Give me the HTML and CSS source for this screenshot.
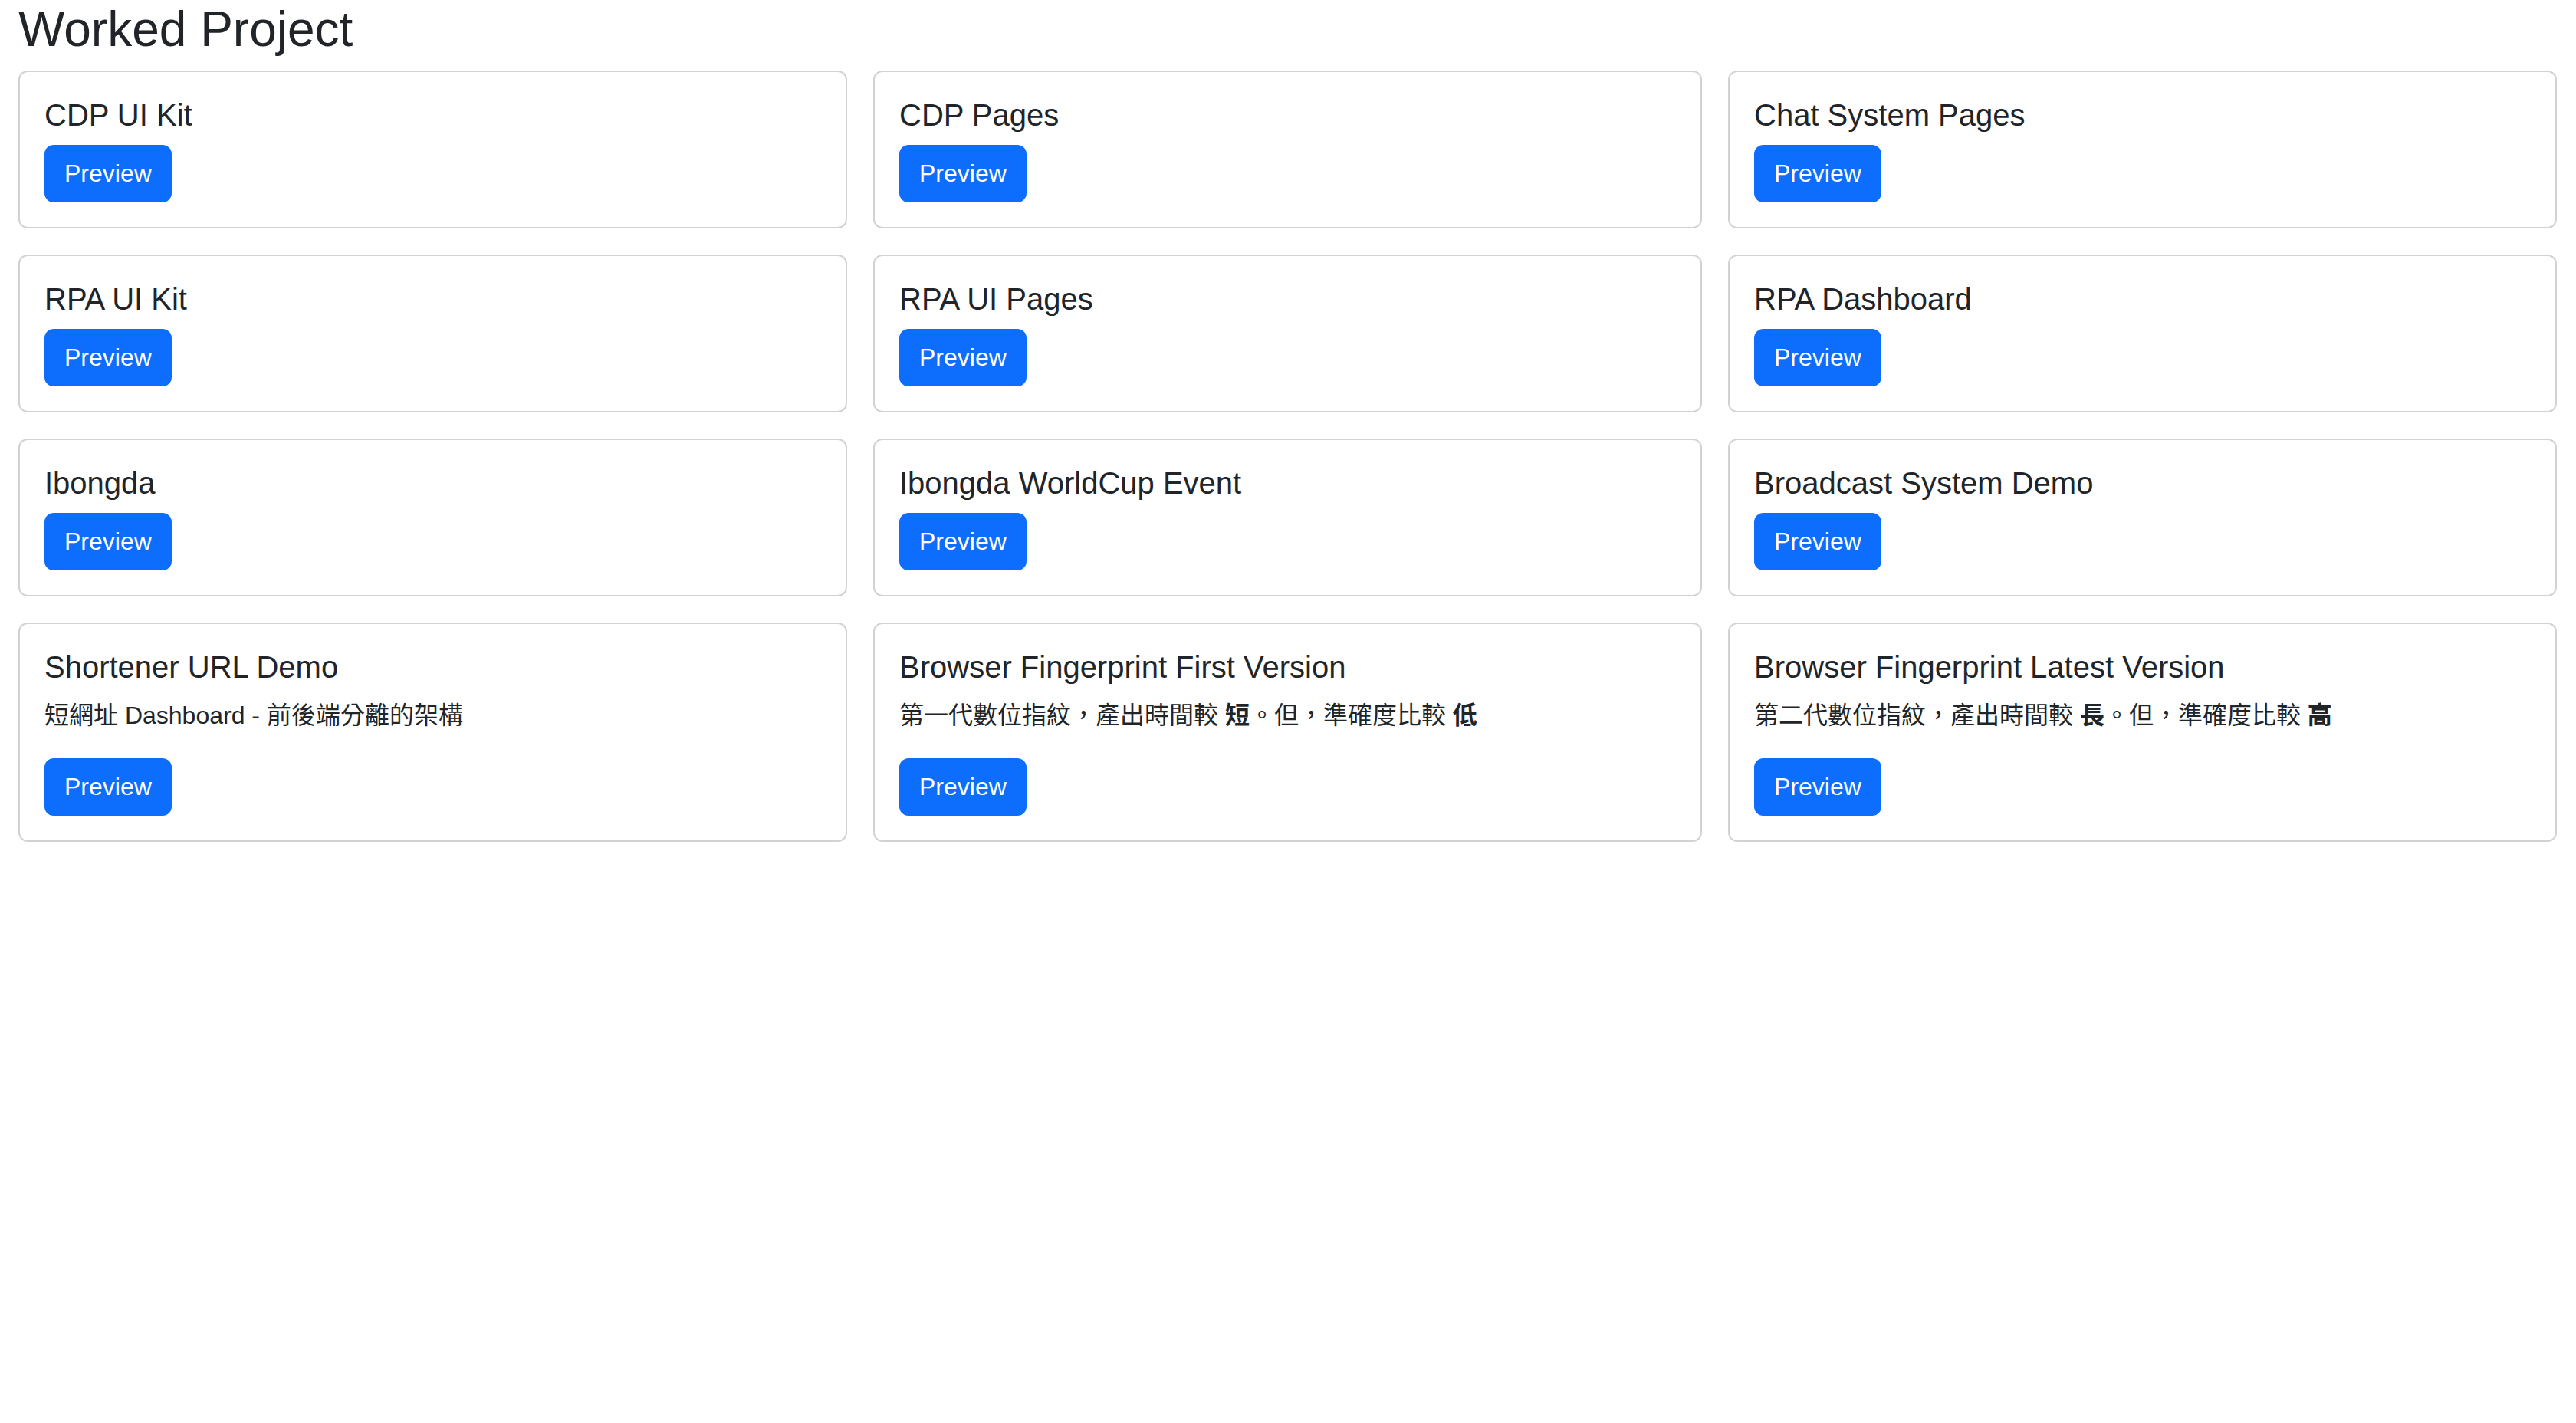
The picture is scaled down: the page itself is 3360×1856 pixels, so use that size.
FILE: index.html
```html
<!DOCTYPE html>
<html lang="zh-Hant">
<head>
    <meta charset="UTF-8">
    <meta name="viewport" content="width=device-width, initial-scale=1.0">
    <title>Worked Project</title>
    <link rel="stylesheet" href="styles.css">
</head>
<body>
    <div class="container">
        <h1>Worked Project</h1>
        <div class="project-grid">
            <div class="card">
                <div class="card-body">
                    <h5 class="card-title">CDP UI Kit</h5>
                    <a class="btn" href="#">Preview</a>
                </div>
            </div>
            <div class="card">
                <div class="card-body">
                    <h5 class="card-title">CDP Pages</h5>
                    <a class="btn" href="#">Preview</a>
                </div>
            </div>
            <div class="card">
                <div class="card-body">
                    <h5 class="card-title">Chat System Pages</h5>
                    <a class="btn" href="#">Preview</a>
                </div>
            </div>
            <div class="card">
                <div class="card-body">
                    <h5 class="card-title">RPA UI Kit</h5>
                    <a class="btn" href="#">Preview</a>
                </div>
            </div>
            <div class="card">
                <div class="card-body">
                    <h5 class="card-title">RPA UI Pages</h5>
                    <a class="btn" href="#">Preview</a>
                </div>
            </div>
            <div class="card">
                <div class="card-body">
                    <h5 class="card-title">RPA Dashboard</h5>
                    <a class="btn" href="#">Preview</a>
                </div>
            </div>
            <div class="card">
                <div class="card-body">
                    <h5 class="card-title">Ibongda</h5>
                    <a class="btn" href="#">Preview</a>
                </div>
            </div>
            <div class="card">
                <div class="card-body">
                    <h5 class="card-title">Ibongda WorldCup Event</h5>
                    <a class="btn" href="#">Preview</a>
                </div>
            </div>
            <div class="card">
                <div class="card-body">
                    <h5 class="card-title">Broadcast System Demo</h5>
                    <a class="btn" href="#">Preview</a>
                </div>
            </div>
            <div class="card">
                <div class="card-body">
                    <h5 class="card-title">Shortener URL Demo</h5>
                    <p class="card-text">短網址 Dashboard - 前後端分離的架構</p>
                    <a class="btn" href="#">Preview</a>
                </div>
            </div>
            <div class="card">
                <div class="card-body">
                    <h5 class="card-title">Browser Fingerprint First Version</h5>
                    <p class="card-text">第一代數位指紋，產出時間較 <b>短</b>。但，準確度比較 <b>低</b></p>
                    <a class="btn" href="#">Preview</a>
                </div>
            </div>
            <div class="card">
                <div class="card-body">
                    <h5 class="card-title">Browser Fingerprint Latest Version</h5>
                    <p class="card-text">第二代數位指紋，產出時間較 <b>長</b>。但，準確度比較 <b>高</b></p>
                    <a class="btn" href="#">Preview</a>
                </div>
            </div>
        </div>
    </div>
</body>
</html>
```

FILE: styles.css
```css
body {
    margin: 0;
    font-family: "Liberation Sans", "Noto Sans CJK TC", sans-serif;
    font-size: 32px;
    line-height: 1.5;
    color: #212529;
    background-color: #fff;
}

.container {
    padding: 0 25px 0 24px;
}

h1 {
    margin: 0 0 15px;
    font-size: 64px;
    font-weight: 500;
    line-height: 1.2;
}

.project-grid {
    display: grid;
    grid-template-columns: repeat(3, 1fr);
    gap: 34px;
}

.card {
    border: 2px solid rgba(0, 0, 0, 0.175);
    border-radius: 12px;
    background-color: #fff;
}

.card-body {
    display: flex;
    flex-direction: column;
    align-items: flex-start;
    padding: 32px;
}

.card-title {
    margin: 0 0 15px;
    font-size: 40px;
    font-weight: 500;
    line-height: 48px;
}

.card-text {
    margin: 0 0 32px;
    line-height: 48px;
}

.card-text b {
    font-weight: bold;
}

.btn {
    display: inline-block;
    padding: 12px 24px;
    font-size: 32px;
    line-height: 47px;
    color: #fff;
    background-color: #0d6efd;
    border: 2px solid #0d6efd;
    border-radius: 12px;
    text-decoration: none;
}

.btn:hover {
    background-color: #0b5ed7;
    border-color: #0a58ca;
}
```
